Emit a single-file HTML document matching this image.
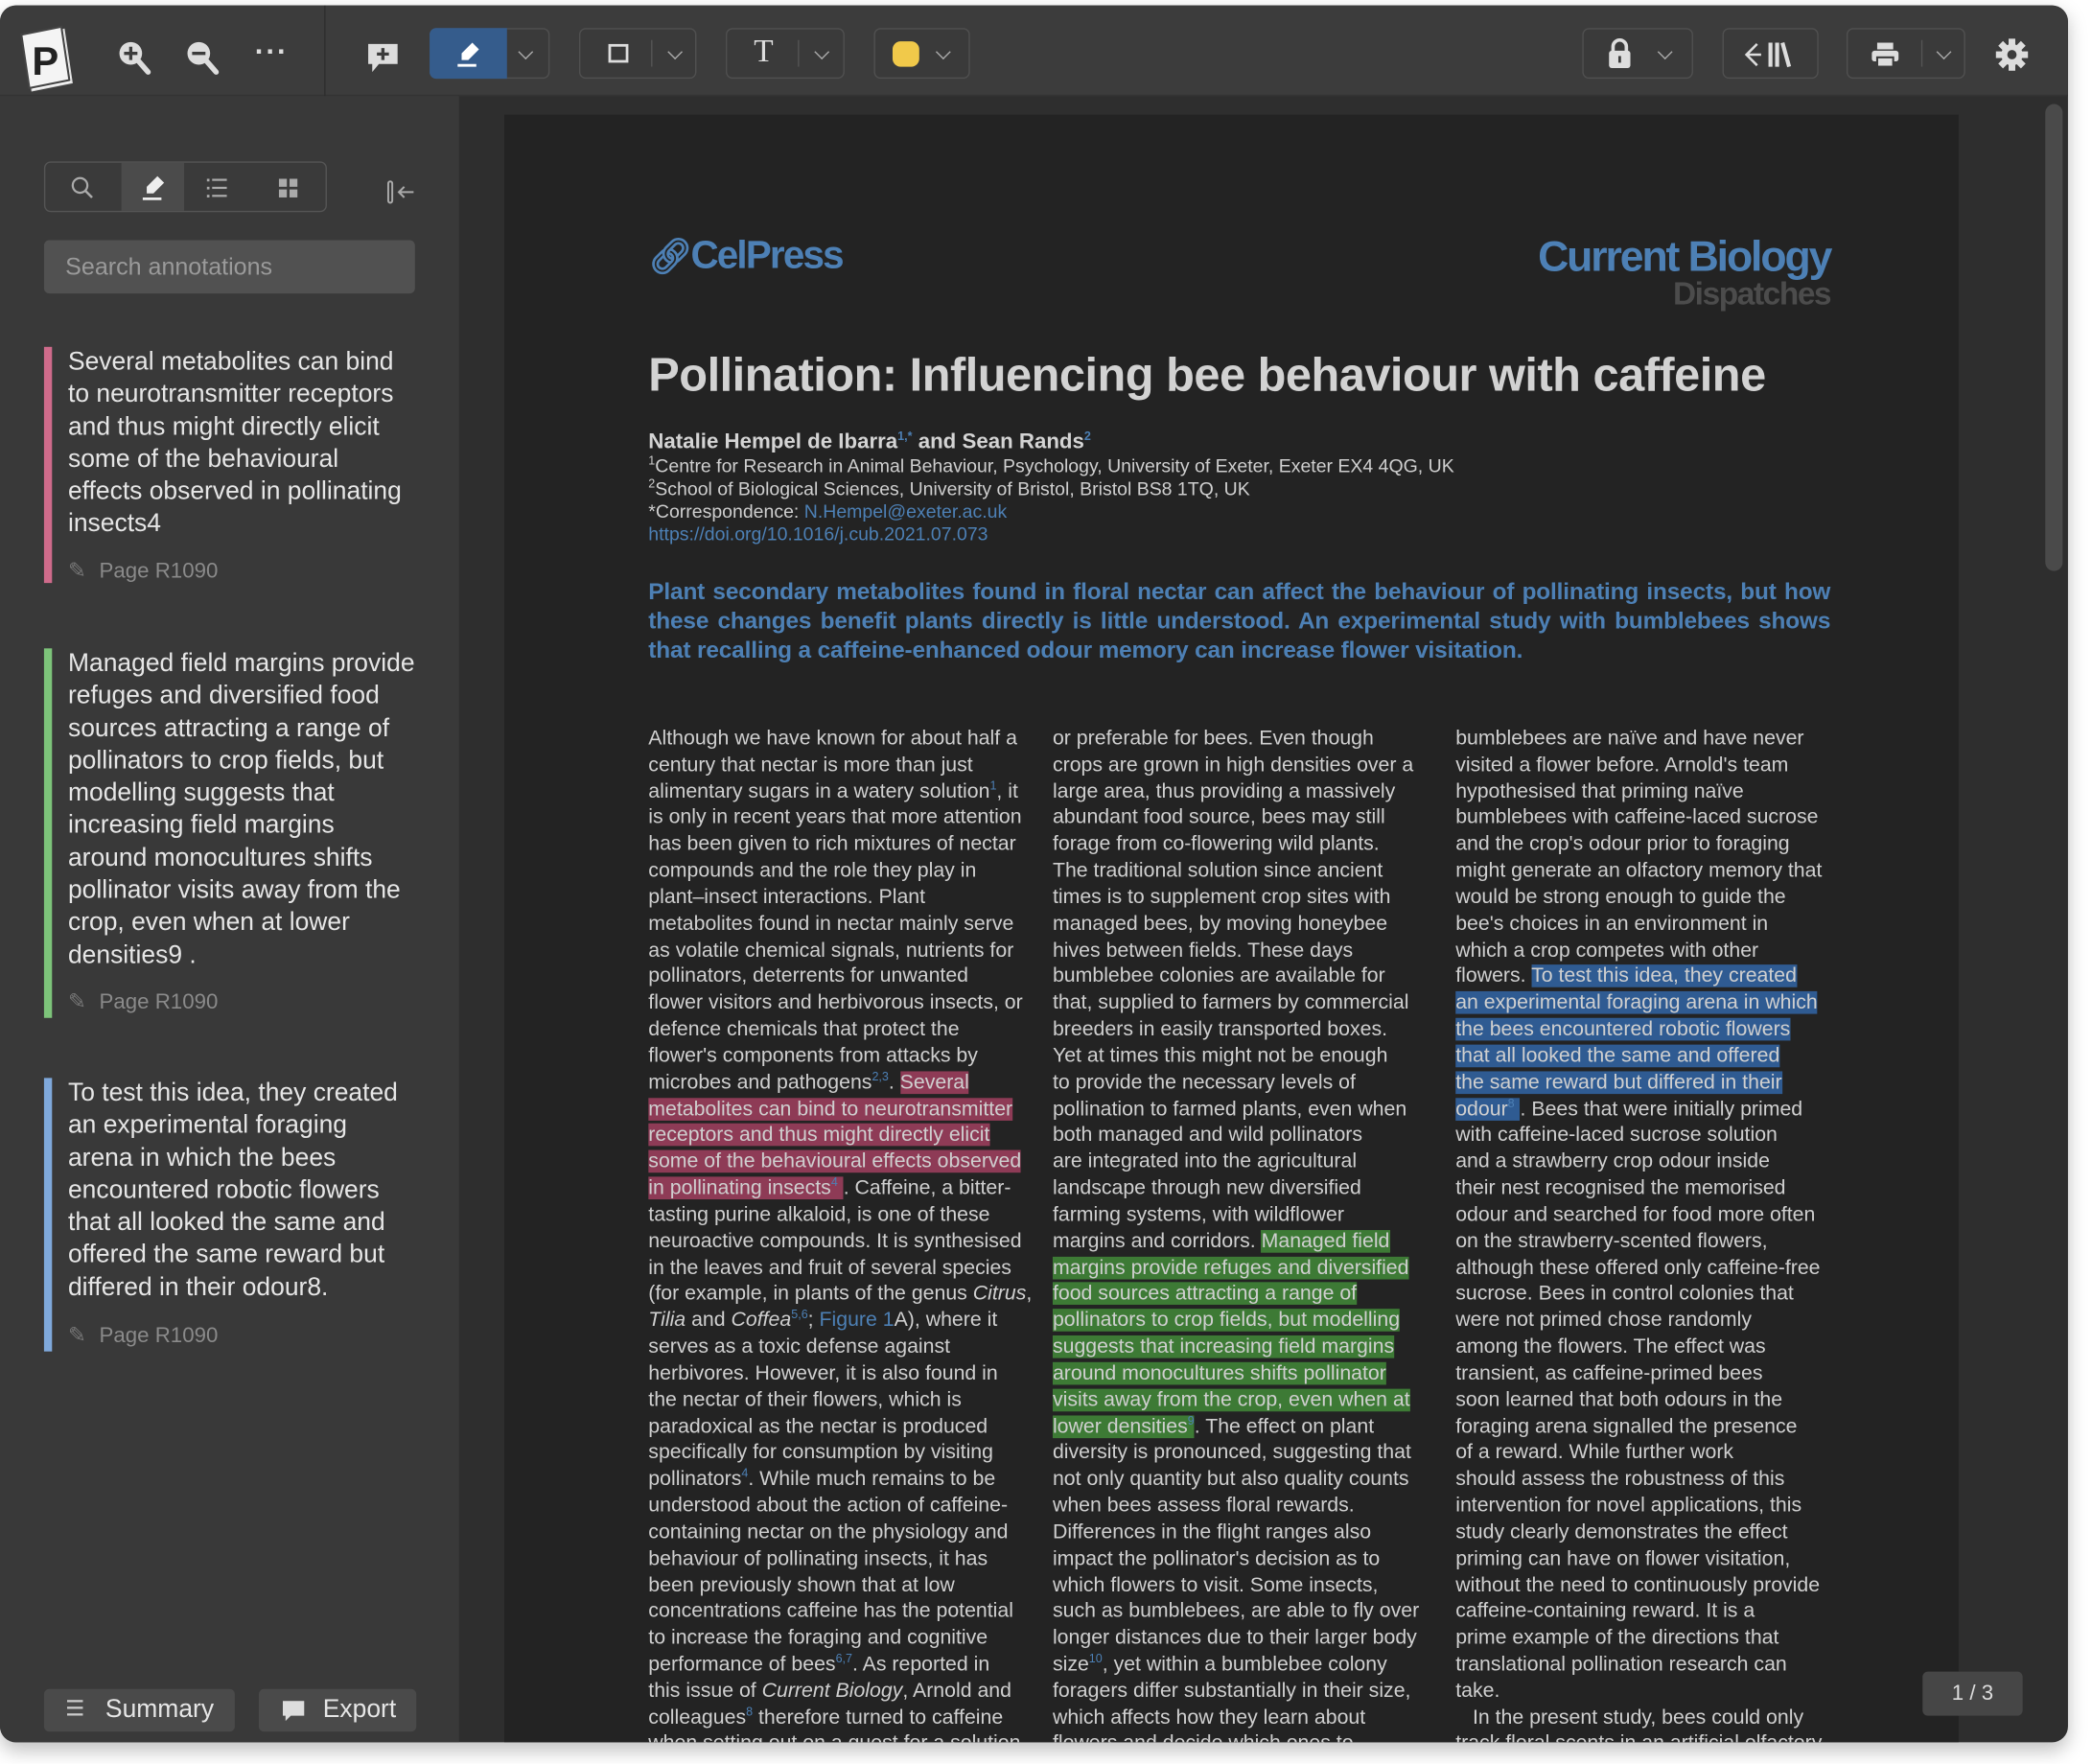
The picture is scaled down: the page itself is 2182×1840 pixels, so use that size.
<!DOCTYPE html>
<html><head><meta charset="utf-8"><style>
*{margin:0;padding:0;box-sizing:border-box}
html,body{width:2182px;height:1840px;overflow:hidden;background:#fff}
#s{position:absolute;left:0;top:0;width:1568px;height:1322px;overflow:hidden;transform:scale(1.39158);transform-origin:0 0;font-family:"Liberation Sans",sans-serif}
.a{position:absolute}
#win{left:0;top:4px;width:1550px;height:1302px;border-radius:12px;overflow:hidden;background:#2e2e2e;box-shadow:0 6px 14px rgba(0,0,0,.25)}
#tb{left:0;top:0;width:1550px;height:68px;background:#3c3c3c;border-bottom:1px solid #333}
.btn{position:absolute;top:17px;height:38px;border:1px solid #505050;border-radius:5px;background:#3a3a3a}
.chev{position:absolute;top:13px;width:8px;height:8px;border-right:1.6px solid #aaa;border-bottom:1.6px solid #aaa;transform:rotate(45deg)}
.sep{position:absolute;top:8px;width:1px;height:20px;background:#555}
#sb{left:0;top:68px;width:344px;height:1234px;background:#393939}
.ann{position:absolute;left:33px;width:290px;border-left:6px solid;padding-left:12px;color:#e6e6e6;font-size:19px;line-height:24.3px;white-space:nowrap}
.pg{position:absolute;left:51px;color:#8a8a8a;font-size:16px}
.pg i{font-style:normal;margin-right:10px;color:#777}
#page{left:378px;top:82px;width:1090px;height:1220px;overflow:hidden;background:#232323}
.col{position:absolute;top:458px;width:290px;font-size:15.3px;line-height:19.83px;color:#cfcfcf;white-space:nowrap}
.hp{background:#8e3b56}.hg{background:#3d7a35}.hb{background:#2f5b92}
sup{font-size:9px;color:#4d80b5;line-height:0}
.bl{color:#4d80b5}
</style></head><body><div id="s">
<div id="win" class="a">
 <div id="tb" class="a">
  <svg class="a" style="left:14px;top:14px" width="46" height="52" viewBox="0 0 46 52"><path d="M4 10 L34 4 L40 44 L10 50 Z" fill="#fff" stroke="#ddd"/><path d="M2 8 L32 2 L38 42 L8 48 Z" fill="#f4f4f4" stroke="#444" stroke-width="1.5"/><text x="10" y="38" font-family="Liberation Sans" font-weight="bold" font-size="30" fill="#222">P</text></svg>
  <svg class="a" style="left:88px;top:26px" width="26" height="28" viewBox="0 0 26 28"><circle cx="10" cy="10" r="8.5" fill="#ddd"/><path d="M16 16 L23 24" stroke="#ddd" stroke-width="4" stroke-linecap="round"/><path d="M10 5v10M5 10h10" stroke="#3c3c3c" stroke-width="2.4"/></svg>
  <svg class="a" style="left:139px;top:26px" width="26" height="28" viewBox="0 0 26 28"><circle cx="10" cy="10" r="8.5" fill="#ddd"/><path d="M16 16 L23 24" stroke="#ddd" stroke-width="4" stroke-linecap="round"/><path d="M5 10h10" stroke="#3c3c3c" stroke-width="2.4"/></svg>
  <div class="a" style="left:191px;top:22px;color:#ddd;font-size:22px;font-weight:bold;letter-spacing:1px">···</div>
  <div class="a" style="left:243px;top:0;width:1px;height:68px;background:#2d2d2d"></div>
  <svg class="a" style="left:274px;top:26px" width="26" height="28" viewBox="0 0 26 28"><path d="M2 3h22v15H10l-5 6v-6H2z" fill="#ddd"/><path d="M13 6v9M8.5 10.5h9" stroke="#3c3c3c" stroke-width="2.4"/></svg>
  <div class="btn" style="left:322px;width:90px"><div class="a" style="left:-1px;top:-1px;width:58px;height:38px;background:#355c8c;border-radius:5px 0 0 5px"></div>
   <svg class="a" style="left:18px;top:8px" width="22" height="22" viewBox="0 0 22 22"><path d="M13 2l5 5-8 8H5v-5z" fill="#fff"/><path d="M2 19h14" stroke="#fff" stroke-width="2"/></svg>
   <div class="chev" style="left:67px"></div></div>
  <div class="btn" style="left:434px;width:88px"><div class="a" style="left:21px;top:11px;width:15px;height:14px;border:2px solid #ddd"></div><div class="sep" style="left:53px"></div><div class="chev" style="left:67px"></div></div>
  <div class="btn" style="left:544px;width:89px"><div class="a" style="left:20px;top:4px;color:#ddd;font-size:24px;font-family:'Liberation Serif',serif">T</div><div class="sep" style="left:53px"></div><div class="chev" style="left:67px"></div></div>
  <div class="btn" style="left:655px;width:72px"><div class="a" style="left:13px;top:9px;width:20px;height:19px;border-radius:6px;background:#f1c94a"></div><div class="chev" style="left:47px"></div></div>
  <div class="btn" style="left:1186px;width:83px"><svg class="a" style="left:17px;top:6px" width="20" height="24" viewBox="0 0 20 24"><path d="M5 11V7a5 5 0 0 1 10 0v4" stroke="#ddd" stroke-width="2.6" fill="none"/><rect x="2" y="10" width="16" height="13" rx="2" fill="#ddd"/><rect x="9" y="14" width="2" height="5" fill="#3a3a3a"/></svg><div class="chev" style="left:57px"></div></div>
  <div class="btn" style="left:1291px;width:72px"><svg class="a" style="left:13px;top:8px" width="46" height="22" viewBox="0 0 46 22"><path d="M12 3l-8 8 8 8M4 11h11" stroke="#ddd" stroke-width="1.8" fill="none"/><path d="M22 2v18M27 2v18" stroke="#ddd" stroke-width="3"/><path d="M31 2l5 18" stroke="#ddd" stroke-width="3"/></svg></div>
  <div class="btn" style="left:1384px;width:89px"><svg class="a" style="left:17px;top:8px" width="22" height="22" viewBox="0 0 22 22"><rect x="5" y="2" width="12" height="5" fill="#ddd"/><rect x="1" y="8" width="20" height="8" rx="2" fill="#ddd"/><rect x="5" y="13" width="12" height="7" fill="#ddd" stroke="#3a3a3a" stroke-width="1.5"/></svg><div class="sep" style="left:55px"></div><div class="chev" style="left:68px"></div></div>
  <svg class="a" style="left:1495px;top:24px" width="26" height="26" viewBox="0 0 26 26"><g fill="#ddd"><circle cx="13" cy="13" r="8"/><rect x="10.5" y="1" width="5" height="24"/><rect x="10.5" y="1" width="5" height="24" transform="rotate(45 13 13)"/><rect x="10.5" y="1" width="5" height="24" transform="rotate(90 13 13)"/><rect x="10.5" y="1" width="5" height="24" transform="rotate(135 13 13)"/></g><circle cx="13" cy="13" r="3.5" fill="#3c3c3c"/></svg>
 </div>
 <div id="sb" class="a">
  <div class="a" style="left:33px;top:49px;width:212px;height:38px;border:1px solid #555;border-radius:5px;background:#3a3a3a">
   <div class="a" style="left:57px;top:0;width:47px;height:36px;background:#4b4b4b"></div>
   <svg class="a" style="left:19px;top:10px" width="18" height="18" viewBox="0 0 18 18"><circle cx="7" cy="7" r="5.5" stroke="#aaa" stroke-width="1.6" fill="none"/><path d="M11 11l5 5" stroke="#aaa" stroke-width="1.8"/></svg>
   <svg class="a" style="left:71px;top:8px" width="22" height="22" viewBox="0 0 22 22"><path d="M13 2l5 5-8 8H5v-5z" fill="#eee"/><path d="M2 19h14" stroke="#eee" stroke-width="2"/></svg>
   <svg class="a" style="left:121px;top:11px" width="16" height="16" viewBox="0 0 16 16"><g fill="#aaa"><rect x="0" y="1" width="2" height="2"/><rect x="0" y="7" width="2" height="2"/><rect x="0" y="13" width="2" height="2"/><rect x="4" y="1" width="11" height="1.6"/><rect x="4" y="7" width="11" height="1.6"/><rect x="4" y="13" width="11" height="1.6"/></g></svg>
   <svg class="a" style="left:175px;top:12px" width="14" height="14" viewBox="0 0 14 14"><g fill="#aaa"><rect width="6" height="6"/><rect x="8" width="6" height="6"/><rect y="8" width="6" height="6"/><rect x="8" y="8" width="6" height="6"/></g></svg>
  </div>
  <svg class="a" style="left:290px;top:62px" width="22" height="20" viewBox="0 0 22 20"><rect x="1" y="2" width="3" height="16" rx="1.5" stroke="#aaa" stroke-width="1.4" fill="none"/><path d="M20 10H9M13 6l-4 4 4 4" stroke="#aaa" stroke-width="1.5" fill="none"/></svg>
  <div class="a" style="left:33px;top:108px;width:278px;height:40px;background:#515151;border-radius:4px;color:#9a9a9a;font-size:18px;line-height:40px;padding-left:16px">Search annotations</div>
  <div class="ann" style="top:188px;height:177px;border-color:#cf6b8b">Several metabolites can bind<br>to neurotransmitter receptors<br>and thus might directly elicit<br>some of the behavioural<br>effects observed in pollinating<br>insects4</div>
  <div class="pg" style="top:346px"><i>✎</i>Page R1090</div>
  <div class="ann" style="top:414px;height:277px;border-color:#7dc47a">Managed field margins provide<br>refuges and diversified food<br>sources attracting a range of<br>pollinators to crop fields, but<br>modelling suggests that<br>increasing field margins<br>around monocultures shifts<br>pollinator visits away from the<br>crop, even when at lower<br>densities9 .</div>
  <div class="pg" style="top:669px"><i>✎</i>Page R1090</div>
  <div class="ann" style="top:736px;height:205px;border-color:#7fa9dc">To test this idea, they created<br>an experimental foraging<br>arena in which the bees<br>encountered robotic flowers<br>that all looked the same and<br>offered the same reward but<br>differed in their odour8.</div>
  <div class="pg" style="top:919px"><i>✎</i>Page R1090</div>
  <div class="a" style="left:33px;top:1194px;width:143px;height:32px;background:#4a4a4a;border-radius:4px;color:#e6e6e6;font-size:19px;line-height:32px;padding-left:46px">Summary<span class="a" style="left:16px;top:0;font-size:16px;color:#ccc">☰</span></div>
  <div class="a" style="left:194px;top:1194px;width:118px;height:32px;background:#4a4a4a;border-radius:4px;color:#e6e6e6;font-size:19px;line-height:32px;padding-left:48px">Export<svg class="a" style="left:17px;top:8px" width="18" height="17" viewBox="0 0 18 17"><path d="M1 1h16v11H7l-4 4v-4H1z" fill="#ddd"/></svg></div>
 </div>
 <div id="page" class="a">
  <div class="a" style="left:108px;top:90px;color:#4d80b5;font-size:29px;font-weight:bold;letter-spacing:-1.3px"><span style="font-size:26px">&#x1F517;&#xFE0E;</span>CelPress</div>
  <div class="a" style="right:96px;top:88px;color:#4d80b5;font-size:32px;font-weight:bold;letter-spacing:-1.5px">Current Biology</div>
  <div class="a" style="right:96px;top:121px;color:#4c4c4c;font-size:24px;font-weight:bold;letter-spacing:-1px">Dispatches</div>
  <div class="a" style="left:108px;top:176px;color:#d2d2d2;font-size:35px;font-weight:bold;letter-spacing:-.35px;white-space:nowrap">Pollination: Influencing bee behaviour with caffeine</div>
  <div class="a" style="left:108px;top:237px;color:#d4d4d4;font-size:16px;font-weight:bold">Natalie Hempel de Ibarra<sup>1,*</sup> and Sean Rands<sup>2</sup></div>
  <div class="a" style="left:108px;top:255px;color:#cfcfcf;font-size:14px;line-height:17px;white-space:nowrap"><sup style="color:#ccc">1</sup>Centre for Research in Animal Behaviour, Psychology, University of Exeter, Exeter EX4 4QG, UK<br><sup style="color:#ccc">2</sup>School of Biological Sciences, University of Bristol, Bristol BS8 1TQ, UK<br>*Correspondence: <span class="bl">N.Hempel@exeter.ac.uk</span><br><span class="bl">https://doi.org/10.1016/j.cub.2021.07.073</span></div>
  <div class="a" style="left:108px;top:346px;width:886px;color:#4d80b5;font-size:17.5px;line-height:22px;font-weight:bold;text-align:justify;letter-spacing:-.1px">Plant secondary metabolites found in floral nectar can affect the behaviour of pollinating insects, but how these changes benefit plants directly is little understood. An experimental study with bumblebees shows that recalling a caffeine-enhanced odour memory can increase flower visitation.</div>
  <div class="col" style="left:108px">Although we have known for about half a<br>century that nectar is more than just<br>alimentary sugars in a watery solution<sup>1</sup>, it<br>is only in recent years that more attention<br>has been given to rich mixtures of nectar<br>compounds and the role they play in<br>plant–insect interactions. Plant<br>metabolites found in nectar mainly serve<br>as volatile chemical signals, nutrients for<br>pollinators, deterrents for unwanted<br>flower visitors and herbivorous insects, or<br>defence chemicals that protect the<br>flower's components from attacks by<br>microbes and pathogens<sup>2,3</sup>. <span class="hp">Several</span><br><span class="hp">metabolites can bind to neurotransmitter</span><br><span class="hp">receptors and thus might directly elicit</span><br><span class="hp">some of the behavioural effects observed</span><br><span class="hp">in pollinating insects<sup>4</sup> </span>. Caffeine, a bitter-<br>tasting purine alkaloid, is one of these<br>neuroactive compounds. It is synthesised<br>in the leaves and fruit of several species<br>(for example, in plants of the genus <i>Citrus</i>,<br><i>Tilia</i> and <i>Coffea</i><sup>5,6</sup>; <span class="bl">Figure 1</span>A), where it<br>serves as a toxic defense against<br>herbivores. However, it is also found in<br>the nectar of their flowers, which is<br>paradoxical as the nectar is produced<br>specifically for consumption by visiting<br>pollinators<sup>4</sup>. While much remains to be<br>understood about the action of caffeine-<br>containing nectar on the physiology and<br>behaviour of pollinating insects, it has<br>been previously shown that at low<br>concentrations caffeine has the potential<br>to increase the foraging and cognitive<br>performance of bees<sup>6,7</sup>. As reported in<br>this issue of <i>Current Biology</i>, Arnold and<br>colleagues<sup>8</sup> therefore turned to caffeine<br>when setting out on a quest for a solution</div>
  <div class="col" style="left:411px">or preferable for bees. Even though<br>crops are grown in high densities over a<br>large area, thus providing a massively<br>abundant food source, bees may still<br>forage from co-flowering wild plants.<br>The traditional solution since ancient<br>times is to supplement crop sites with<br>managed bees, by moving honeybee<br>hives between fields. These days<br>bumblebee colonies are available for<br>that, supplied to farmers by commercial<br>breeders in easily transported boxes.<br>Yet at times this might not be enough<br>to provide the necessary levels of<br>pollination to farmed plants, even when<br>both managed and wild pollinators<br>are integrated into the agricultural<br>landscape through new diversified<br>farming systems, with wildflower<br>margins and corridors. <span class="hg">Managed field</span><br><span class="hg">margins provide refuges and diversified</span><br><span class="hg">food sources attracting a range of</span><br><span class="hg">pollinators to crop fields, but modelling</span><br><span class="hg">suggests that increasing field margins</span><br><span class="hg">around monocultures shifts pollinator</span><br><span class="hg">visits away from the crop, even when at</span><br><span class="hg">lower densities<sup>9</sup></span>. The effect on plant<br>diversity is pronounced, suggesting that<br>not only quantity but also quality counts<br>when bees assess floral rewards.<br>Differences in the flight ranges also<br>impact the pollinator's decision as to<br>which flowers to visit. Some insects,<br>such as bumblebees, are able to fly over<br>longer distances due to their larger body<br>size<sup>10</sup>, yet within a bumblebee colony<br>foragers differ substantially in their size,<br>which affects how they learn about<br>flowers and decide which ones to</div>
  <div class="col" style="left:713px">bumblebees are naïve and have never<br>visited a flower before. Arnold's team<br>hypothesised that priming naïve<br>bumblebees with caffeine-laced sucrose<br>and the crop's odour prior to foraging<br>might generate an olfactory memory that<br>would be strong enough to guide the<br>bee's choices in an environment in<br>which a crop competes with other<br>flowers. <span class="hb">To test this idea, they created</span><br><span class="hb">an experimental foraging arena in which</span><br><span class="hb">the bees encountered robotic flowers</span><br><span class="hb">that all looked the same and offered</span><br><span class="hb">the same reward but differed in their</span><br><span class="hb">odour<sup>8</sup> </span>. Bees that were initially primed<br>with caffeine-laced sucrose solution<br>and a strawberry crop odour inside<br>their nest recognised the memorised<br>odour and searched for food more often<br>on the strawberry-scented flowers,<br>although these offered only caffeine-free<br>sucrose. Bees in control colonies that<br>were not primed chose randomly<br>among the flowers. The effect was<br>transient, as caffeine-primed bees<br>soon learned that both odours in the<br>foraging arena signalled the presence<br>of a reward. While further work<br>should assess the robustness of this<br>intervention for novel applications, this<br>study clearly demonstrates the effect<br>priming can have on flower visitation,<br>without the need to continuously provide<br>caffeine-containing reward. It is a<br>prime example of the directions that<br>translational pollination research can<br>take.<br>&nbsp;&nbsp;&nbsp;In the present study, bees could only<br>track floral scents in an artificial olfactory</div>
 </div>
 <div class="a" style="left:1533px;top:74px;width:13px;height:350px;border-radius:7px;background:#4a4a4a"></div>
 <div class="a" style="left:1441px;top:1249px;width:75px;height:33px;border-radius:4px;background:#464646;color:#ddd;font-size:16px;line-height:33px;text-align:center">1 / 3</div>
</div>
</div></body></html>
